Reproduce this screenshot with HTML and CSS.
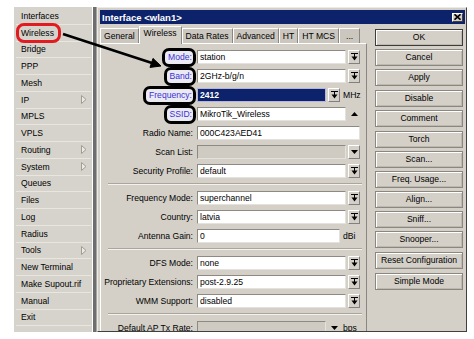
FILE: index.html
```html
<!DOCTYPE html>
<html lang="en">
<head>
    <meta charset="UTF-8">
    <title>Interface &lt;wlan1&gt;</title>
    <link rel="stylesheet" href="styles.css">
</head>
<body>
    <div class="screen">
        <nav class="menu">
            <div class="item">Interfaces</div>
            <div class="item"><span class="circled">Wireless</span></div>
            <div class="item">Bridge</div>
            <div class="item">PPP</div>
            <div class="item">Mesh</div>
            <div class="item">IP <svg class="sub" width="6" height="9" viewBox="0 0 6 9"><path d="M.5 .5L5 4.5L.5 8.5z" fill="#ece9e3" stroke="#a19d95"/></svg></div>
            <div class="item">MPLS</div>
            <div class="item">VPLS</div>
            <div class="item">Routing <svg class="sub" width="6" height="9" viewBox="0 0 6 9"><path d="M.5 .5L5 4.5L.5 8.5z" fill="#ece9e3" stroke="#a19d95"/></svg></div>
            <div class="item">System <svg class="sub" width="6" height="9" viewBox="0 0 6 9"><path d="M.5 .5L5 4.5L.5 8.5z" fill="#ece9e3" stroke="#a19d95"/></svg></div>
            <div class="item">Queues</div>
            <div class="item">Files</div>
            <div class="item">Log</div>
            <div class="item">Radius</div>
            <div class="item">Tools <svg class="sub" width="6" height="9" viewBox="0 0 6 9"><path d="M.5 .5L5 4.5L.5 8.5z" fill="#ece9e3" stroke="#a19d95"/></svg></div>
            <div class="item">New Terminal</div>
            <div class="item">Make Supout.rif</div>
            <div class="item">Manual</div>
            <div class="item">Exit</div>
        </nav>

        <div class="divider"></div>

        <div class="dialog">
            <div class="titlebar">
                <span>Interface &lt;wlan1&gt;</span>
                <span class="close"><svg width="7" height="6" viewBox="0 0 7 6"><path d="M.5 .3L6.5 5.7M6.5 .3L.5 5.7" stroke="#000" stroke-width="1.6"/></svg></span>
            </div>

            <div class="dlg-body">
                <div class="tabs-area">
                    <div class="tabs">
                        <span class="tab">General</span>
                        <span class="tab active">Wireless</span>
                        <span class="tab">Data Rates</span>
                        <span class="tab">Advanced</span>
                        <span class="tab">HT</span>
                        <span class="tab">HT MCS</span>
                        <span class="tab more">...</span>
                    </div>

                    <div class="tab-page">
                        <div class="row">
                            <span class="lbl"><span class="mark">Mode:</span></span>
                            <div class="field">station</div>
                            <span class="cbtn"><svg width="7" height="8" viewBox="0 0 7 8"><path d="M0 .5h7M3.5 1v3" stroke="#000"/><path d="M.5 3.5h6L3.5 7.5z" fill="#000"/></svg></span>
                        </div>
                        <div class="row">
                            <span class="lbl"><span class="mark">Band:</span></span>
                            <div class="field">2GHz-b/g/n</div>
                            <span class="cbtn"><svg width="7" height="8" viewBox="0 0 7 8"><path d="M0 .5h7M3.5 1v3" stroke="#000"/><path d="M.5 3.5h6L3.5 7.5z" fill="#000"/></svg></span>
                        </div>
                        <div class="row">
                            <span class="lbl"><span class="mark">Frequency:</span></span>
                            <div class="field short selected">2412</div>
                            <span class="cbtn"><svg width="7" height="8" viewBox="0 0 7 8"><path d="M0 .5h7M3.5 1v3" stroke="#000"/><path d="M.5 3.5h6L3.5 7.5z" fill="#000"/></svg></span>
                            <span class="unit">MHz</span>
                        </div>
                        <div class="row">
                            <span class="lbl"><span class="mark">SSID:</span></span>
                            <div class="field">MikroTik_Wireless</div>
                            <span class="spin"><svg width="7" height="4" viewBox="0 0 7 4"><path d="M0 4h7L3.5 0z" fill="#000"/></svg></span>
                        </div>
                        <div class="row">
                            <span class="lbl">Radio Name:</span>
                            <div class="field wide">000C423AED41</div>
                        </div>
                        <div class="row">
                            <span class="lbl">Scan List:</span>
                            <div class="field disabled"></div>
                            <span class="cbtn"><svg width="7" height="4" viewBox="0 0 7 4"><path d="M0 0h7L3.5 4z" fill="#000"/></svg></span>
                        </div>
                        <div class="row">
                            <span class="lbl">Security Profile:</span>
                            <div class="field">default</div>
                            <span class="cbtn"><svg width="7" height="8" viewBox="0 0 7 8"><path d="M0 .5h7M3.5 1v3" stroke="#000"/><path d="M.5 3.5h6L3.5 7.5z" fill="#000"/></svg></span>
                        </div>

                        <div class="sep"></div>

                        <div class="row">
                            <span class="lbl">Frequency Mode:</span>
                            <div class="field">superchannel</div>
                            <span class="cbtn"><svg width="7" height="8" viewBox="0 0 7 8"><path d="M0 .5h7M3.5 1v3" stroke="#000"/><path d="M.5 3.5h6L3.5 7.5z" fill="#000"/></svg></span>
                        </div>
                        <div class="row">
                            <span class="lbl">Country:</span>
                            <div class="field">latvia</div>
                            <span class="cbtn"><svg width="7" height="8" viewBox="0 0 7 8"><path d="M0 .5h7M3.5 1v3" stroke="#000"/><path d="M.5 3.5h6L3.5 7.5z" fill="#000"/></svg></span>
                        </div>
                        <div class="row">
                            <span class="lbl">Antenna Gain:</span>
                            <div class="field gain">0</div>
                            <span class="unit">dBi</span>
                        </div>

                        <div class="sep"></div>

                        <div class="row">
                            <span class="lbl">DFS Mode:</span>
                            <div class="field">none</div>
                            <span class="cbtn"><svg width="7" height="8" viewBox="0 0 7 8"><path d="M0 .5h7M3.5 1v3" stroke="#000"/><path d="M.5 3.5h6L3.5 7.5z" fill="#000"/></svg></span>
                        </div>
                        <div class="row">
                            <span class="lbl">Proprietary Extensions:</span>
                            <div class="field">post-2.9.25</div>
                            <span class="cbtn"><svg width="7" height="8" viewBox="0 0 7 8"><path d="M0 .5h7M3.5 1v3" stroke="#000"/><path d="M.5 3.5h6L3.5 7.5z" fill="#000"/></svg></span>
                        </div>
                        <div class="row">
                            <span class="lbl">WMM Support:</span>
                            <div class="field">disabled</div>
                            <span class="cbtn"><svg width="7" height="8" viewBox="0 0 7 8"><path d="M0 .5h7M3.5 1v3" stroke="#000"/><path d="M.5 3.5h6L3.5 7.5z" fill="#000"/></svg></span>
                        </div>

                        <div class="sep"></div>

                        <div class="row">
                            <span class="lbl">Default AP Tx Rate:</span>
                            <div class="field short disabled"></div>
                            <span class="cbtn flat"><svg width="7" height="4" viewBox="0 0 7 4"><path d="M0 0h7L3.5 4z" fill="#000"/></svg></span>
                            <span class="unit">bps</span>
                        </div>
                    </div>
                </div>

                <div class="buttons">
                    <div class="btn default">OK</div>
                    <div class="btn">Cancel</div>
                    <div class="btn">Apply</div>
                    <div class="btn group">Disable</div>
                    <div class="btn">Comment</div>
                    <div class="btn group">Torch</div>
                    <div class="btn">Scan...</div>
                    <div class="btn">Freq. Usage...</div>
                    <div class="btn">Align...</div>
                    <div class="btn">Sniff...</div>
                    <div class="btn">Snooper...</div>
                    <div class="btn group">Reset Configuration</div>
                    <div class="btn group">Simple Mode</div>
                </div>
            </div>
        </div>
    </div>

    <!-- annotation arrow drawn over the screenshot -->
    <svg class="annot" width="474" height="339" viewBox="0 0 474 339">
        <path d="M63 34L152 63" stroke="#000" stroke-width="2.6"/>
        <path d="M161 66L150 67.4L153 58.4z" fill="#000" stroke="#000" stroke-width="1"/>
    </svg>
</body>
</html>
```

FILE: styles.css
```css
body {
    margin: 0;
    background: #fff;
    font-family: 'Liberation Sans', Arial, sans-serif;
    font-size: 8.6px;
    color: #000;
}
.screen {
    display: flex;
    margin: 7px 0 0 14px;
    width: 453px;
    height: 325px;
    overflow: hidden;
}

/* left menu */
.menu {
    width: 78px;
    background: #d6d3cc;
    padding-top: 1px;
    box-sizing: border-box;
}
.item {
    height: 16.75px;
    margin: 0 1px 0 2px;
    padding: 0 4px 0 5px;
    display: flex;
    align-items: center;
    justify-content: space-between;
    border-bottom: 1px solid #e9e6e0;
    box-sizing: border-box;
    white-space: nowrap;
}
.circled {
    display: inline-block;
    border: 3px solid #e11b1f;
    border-radius: 8px;
    padding: 0 4px 0 2px;
    margin-left: -5px;
    line-height: 14px;
}
.sub {
    display: block;
}
.divider {
    width: 3px;
    margin-left: 1px;
    background: #6e6e6e;
    border-right: 1px solid #a6a6a6;
}

/* dialog */
.dialog {
    flex: 1;
    display: flex;
    flex-direction: column;
    background: #d4d0c8;
    border: 1px solid;
    border-color: #eceae4 #404040 #404040 #eceae4;
    padding: 2px 1px 0 2px;
    overflow: hidden;
}
.titlebar {
    height: 14px;
    background: #0c236b;
    color: #fff;
    font-weight: bold;
    font-size: 9.5px;
    display: flex;
    align-items: center;
    justify-content: space-between;
    padding: 0 2px 0 2px;
    flex: none;
}
.close {
    width: 11px;
    height: 9px;
    background: #d4d0c8;
    border: 1px solid;
    border-color: #fff #404040 #404040 #fff;
    box-sizing: border-box;
    display: flex;
    align-items: center;
    justify-content: center;
}
.dlg-body {
    flex: 1;
    display: flex;
}
.tabs-area {
    width: 267px;
    display: flex;
    flex-direction: column;
}
.tabs {
    display: flex;
    align-items: flex-end;
    height: 17px;
    margin-top: 2px;
}
.tab {
    height: 15px;
    line-height: 14px;
    padding: 0 3px;
    background: #cbc7bf;
    border: 1px solid;
    border-color: #fff #8a8780 transparent #fff;
    border-bottom: none;
    box-sizing: border-box;
    white-space: nowrap;
}
.tab.active {
    height: 18px;
    line-height: 13px;
    padding: 0 4px;
    background: #d4d0c8;
    margin-bottom: -1px;
    position: relative;
}
.tab.more {
    padding: 0 6px;
}
.tab-page {
    flex: 1;
    border: 1px solid;
    border-color: #fff #8a8780 transparent #fff;
    border-bottom: none;
    padding-top: 6px;
}
.row {
    display: flex;
    align-items: center;
    height: 14px;
    margin-bottom: 5px;
    white-space: nowrap;
}
.lbl {
    flex: none;
    width: 92px;
    margin-right: 4px;
    text-align: right;
}
.mark {
    display: inline-block;
    border: 3px solid #000;
    border-radius: 7px;
    background: #ebe9f1;
    color: #3a33d8;
    padding: 1px 1px 1px 3px;
    line-height: 11px;
    margin-right: -3px;
}
.field {
    width: 149px;
    height: 14px;
    line-height: 12px;
    padding-left: 2px;
    background: #fff;
    border: 1px solid;
    border-color: #8d8a84 #e4e2dc #e4e2dc #8d8a84;
    box-sizing: border-box;
    flex: none;
}
.field.wide {
    width: 163px;
}
.field.short {
    width: 129px;
}
.field.gain {
    width: 143px;
}
.field.selected {
    background: #0c236b;
    color: #fff;
    font-weight: bold;
    border-color: #b8b4e0;
}
.field.disabled {
    background: #cfcbc3;
}
.cbtn, .spin {
    width: 12px;
    height: 14px;
    margin-left: 2px;
    display: flex;
    align-items: center;
    justify-content: center;
    box-sizing: border-box;
    flex: none;
}
.cbtn {
    border: 1px solid;
    border-color: #fff #808080 #808080 #fff;
}
.cbtn.flat {
    border-color: transparent;
}
.unit {
    margin-left: 3px;
}
.sep {
    height: 0;
    border-top: 1px solid #aaa69e;
    border-bottom: 1px solid #f4f2ee;
    margin: 0 4px 6px 7px;
}

/* right button column */
.buttons {
    width: 88px;
    margin-left: 8px;
    padding-top: 5px;
}
.btn {
    height: 17px;
    line-height: 15px;
    margin-bottom: 3px;
    text-align: center;
    border: 1px solid #8a8780;
    box-shadow: inset 1px 1px #fff, inset -1px -1px #bdb9b1;
    box-sizing: border-box;
    white-space: nowrap;
}
.btn.default {
    border-color: #3c3c3c;
}
.btn.group {
    margin-top: 4px;
}

.annot {
    position: absolute;
    left: 0;
    top: 0;
    pointer-events: none;
}
```
